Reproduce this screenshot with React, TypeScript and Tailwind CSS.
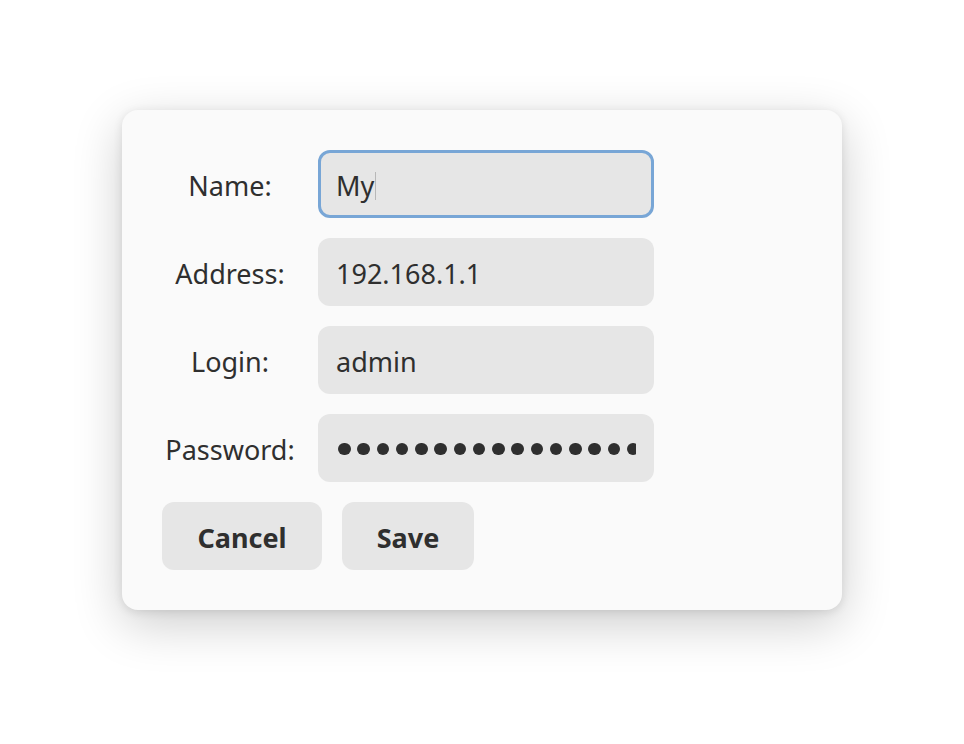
export default function App() {
  const font = { fontFamily: '"Noto Sans", "Open Sans", sans-serif' };
  const rows = [
    { label: "Address:", value: "192.168.1.1" },
    { label: "Login:", value: "admin" },
  ];

  return (
    <div className="min-h-[744px] w-[964px] bg-white pt-[110px] pl-[122px]" style={font}>
      <div className="w-[720px] rounded-[16px] bg-[#fafafa] p-[40px] text-[#2f2f2f] shadow-[0_14px_50px_rgba(0,0,0,0.2),0_2px_10px_rgba(0,0,0,0.1)]">
        <div className="flex flex-col gap-[20px]">
          {/* name row, focused */}
          <div className="flex items-center gap-[20px]">
            <div className="w-[136px] pt-[4px] text-center text-[27px]">Name:</div>
            <div className="flex h-[68px] w-[336px] items-center rounded-[12px] border-[3px] border-[#78a6d6] bg-[#e6e6e6] px-[15px] pt-[4px] text-[27px]">
              <span>My</span>
              <span className="ml-[1px] h-[28px] w-px bg-[#b8b8b8]" />
            </div>
          </div>

          {rows.map((r) => (
            <div key={r.label} className="flex items-center gap-[20px]">
              <div className="w-[136px] pt-[4px] text-center text-[27px]">{r.label}</div>
              <div className="flex h-[68px] w-[336px] items-center rounded-[12px] bg-[#e6e6e6] px-[18px] pt-[4px] text-[27px]">
                {r.value}
              </div>
            </div>
          ))}

          <div className="flex items-center gap-[20px]">
            <div className="w-[136px] pt-[4px] text-center text-[27px]">Password:</div>
            <div className="flex h-[68px] w-[336px] items-center rounded-[12px] bg-[#e6e6e6] pl-[20px] pr-[18px] pt-[2px]">
              <div className="flex gap-[6.75px] overflow-hidden">
                {Array.from({ length: 18 }).map((_, i) => (
                  <div key={i} className="h-[12.5px] w-[12.5px] shrink-0 rounded-full bg-[#2f2f2f]" />
                ))}
              </div>
            </div>
          </div>

          <div className="flex gap-[20px]">
            <button className="h-[68px] w-[160px] rounded-[12px] bg-[#e6e6e6] pt-[4px] text-[27px] font-bold">
              Cancel
            </button>
            <button className="h-[68px] w-[132px] rounded-[12px] bg-[#e6e6e6] pt-[4px] text-[27px] font-bold">
              Save
            </button>
          </div>
        </div>
      </div>
    </div>
  );
}
